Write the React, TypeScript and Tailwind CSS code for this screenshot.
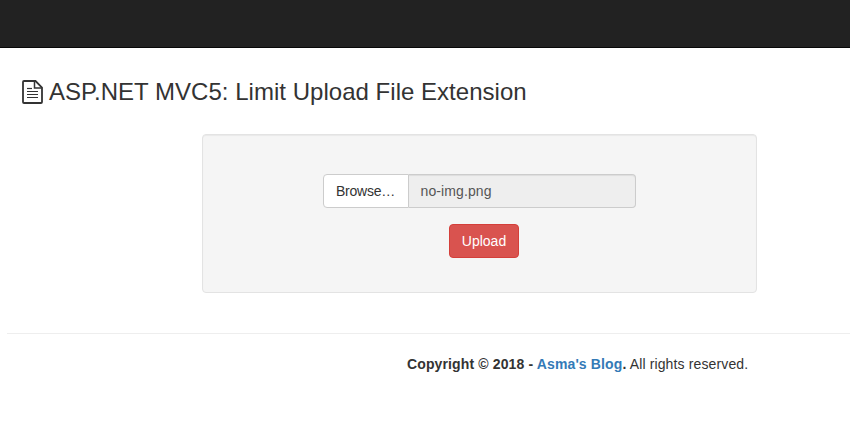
export default function App() {
  return (
    <div className="min-h-[426px] overflow-hidden bg-white font-['Liberation_Sans',Arial,sans-serif] text-[14px] leading-[20px] text-[#333]">
      <div className="h-[48px] border-b border-[#080808] bg-[#222]" />
      <div className="flex items-center pl-[22px] pt-[29px]">
        <svg width="21" height="24" viewBox="0 0 21 24" fill="none" className="mr-[6px] shrink-0 text-[#333]">
          <path d="M2 1H13.5L20 7.5V22a1 1 0 0 1-1 1H2a1 1 0 0 1-1-1V2a1 1 0 0 1 1-1z" stroke="currentColor" strokeWidth="1.8" />
          <path d="M12.5 1.5V8H19.5" stroke="currentColor" strokeWidth="1.5" />
          <path d="M5 11.5H16M5 14.5H16M5 17.5H16" stroke="currentColor" strokeWidth="1.2" />
          <path d="M5 8.5H10" stroke="currentColor" strokeWidth="1.2" />
        </svg>
        <h2 className="text-[24px] font-normal leading-[29px] tracking-[0.025px] text-[#333]">ASP.NET MVC5: Limit Upload File Extension</h2>
      </div>
      <div className="ml-[202px] mt-[28px] flex h-[159px] w-[555px] flex-col items-center rounded-[4px] border border-[#e3e3e3] bg-[#f5f5f5] pt-[39px] shadow-[inset_0_1px_1px_rgba(0,0,0,0.05)]">
        <div className="ml-[-1px] flex h-[34px] w-[313px]">
          <div className="flex w-[86px] items-center justify-center rounded-l-[4px] border border-[#ccc] bg-white tracking-[-0.25px] text-[#333]">Browse…</div>
          <div className="flex flex-1 items-center rounded-r-[4px] border border-l-0 border-[#ccc] bg-[#eee] pl-[12px] tracking-[0.1px] text-[#555] shadow-[inset_0_1px_1px_rgba(0,0,0,0.075)]">no-img.png</div>
        </div>
        <button className="ml-[9px] mt-[16px] h-[34px] w-[70px] rounded-[4px] border border-[#d43f3a] bg-[#d9534f] text-white">Upload</button>
      </div>
      <div className="ml-[7px] mt-[40px] border-t border-[#eee]" />
      <p className="ml-[407px] mt-[20px] whitespace-nowrap tracking-[0.13px]">
        <b className="font-bold">Copyright © 2018 - <span className="text-[#337ab7]">Asma's Blog</span>.</b> All rights reserved.
      </p>
    </div>
  );
}
